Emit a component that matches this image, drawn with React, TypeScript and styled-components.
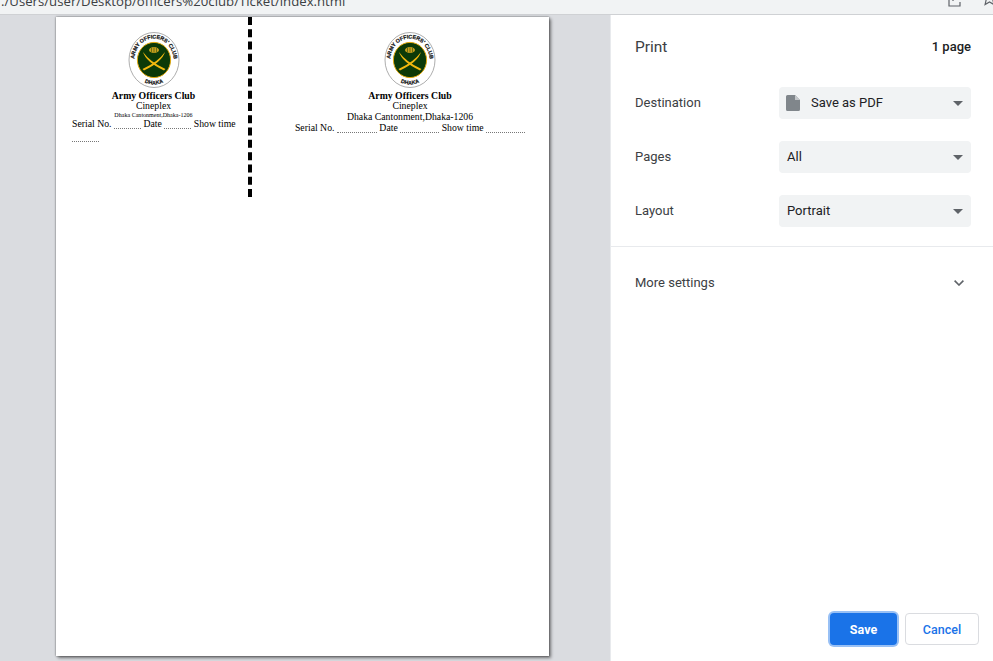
import React from "react";
import styled, { createGlobalStyle } from "styled-components";

const Global = createGlobalStyle`
  html, body { margin: 0; padding: 0; background: #fff; overflow: hidden; }
  #root { width: 993px; height: 661px; }
`;

const Shell = styled.div`
  width: 993px;
  height: 661px;
  display: flex;
  flex-direction: column;
  overflow: hidden;
  font-family: Roboto, "Liberation Sans", sans-serif;
  color: #202124;
`;

const AddressBar = styled.header`
  flex: 0 0 15px;
  height: 15px;
  box-sizing: border-box;
  display: flex;
  align-items: flex-end;
  justify-content: space-between;
  overflow: hidden;
  background: #f1f3f4;
  border-bottom: 1px solid #cfd1d4;
`;

const Url = styled.span`
  font-family: "Open Sans", "Noto Sans", sans-serif;
  font-size: 13.2px;
  line-height: 20px;
  color: #3c4043;
  white-space: nowrap;
  margin: 0 0 3px 1px;
`;

const BarIcons = styled.div`
  display: flex;
  gap: 19px;
  align-items: flex-end;
  margin: 0 -4px 7px 0;
`;

const Main = styled.div`
  flex: 1;
  display: flex;
  min-height: 0;
`;

const Preview = styled.section`
  flex: 0 0 610px;
  background: #dadce0;
  padding: 2px 0 0 56px;
  box-sizing: border-box;
`;

const Sheet = styled.article`
  width: 493px;
  height: 639px;
  background: #fff;
  box-shadow: 0 0 2px rgba(0, 0, 0, 0.55), 2px 2px 3px rgba(0, 0, 0, 0.45);
  display: flex;
  align-items: flex-start;
  font-family: "Liberation Serif", "Times New Roman", serif;
  color: #000;
`;

const Ticket = styled.div<{ $stub?: boolean }>`
  box-sizing: border-box;
  height: 180px;
  padding-top: 14px;
  text-align: center;
  ${(p) =>
    p.$stub
      ? `
    flex: 0 0 196px;
    border-right: 4px dashed #000;
    padding-left: 3px;
  `
      : `
    flex: 0 0 278px;
    margin-left: 19px;
  `}
`;

const Logo = styled.svg`
  display: block;
  margin: 0 auto;
  width: 52px;
  height: 58px;
`;

const Club = styled.div`
  font-size: 9.75px;
  line-height: 11px;
  font-weight: 700;
  margin-top: 1px;
`;

const Venue = styled.div`
  font-size: 9.75px;
  line-height: 10px;
`;

const Address = styled.div<{ $small?: boolean }>`
  font-size: ${(p) => (p.$small ? "6.05px" : "9.75px")};
  line-height: ${(p) => (p.$small ? "8px" : "11px")};
`;

const Fields = styled.div<{ $stub?: boolean }>`
  font-size: 9.75px;
  line-height: 12.5px;
  ${(p) =>
    p.$stub
      ? `text-align: left; width: 170px; margin: -1px 0 0 13px;`
      : `text-align: center; margin-top: 0;`}
`;

const Blank = styled.span<{ $w: number }>`
  display: inline-block;
  width: ${(p) => p.$w}px;
  height: 10px;
  border-bottom: 1px dotted #777;
  vertical-align: -2px;
`;

const Panel = styled.aside`
  flex: 1;
  box-sizing: border-box;
  border-left: 1px solid #e8eaed;
  background: #fff;
  display: flex;
  flex-direction: column;
`;

const PanelHead = styled.div`
  display: flex;
  justify-content: space-between;
  align-items: center;
  height: 20px;
  margin-top: 22px;
  padding: 0 22px 0 24px;
`;

const Title = styled.h1`
  margin: 0;
  font-size: 15.5px;
  font-weight: 400;
  color: #3c4043;
`;

const PageCount = styled.span`
  font-size: 13px;
  font-weight: 500;
  color: #202124;
  padding-bottom: 1px;
`;

const Settings = styled.div`
  display: flex;
  flex-direction: column;
  gap: 22px;
  margin-top: 30px;
  padding: 0 22px 0 24px;
`;

const Row = styled.div`
  display: flex;
  align-items: center;
  justify-content: space-between;
`;

const Label = styled.span`
  font-size: 13px;
  color: #3c4043;
  padding-bottom: 2px;
`;

const Select = styled.div`
  width: 192px;
  height: 32px;
  box-sizing: border-box;
  background: #f1f3f4;
  border-radius: 4px;
  display: flex;
  align-items: center;
  padding: 0 8px;
  gap: 11px;
  font-size: 13px;
  color: #202124;
`;

const SelectText = styled.span`
  flex: 1;
  padding-bottom: 2px;
`;

const Caret = styled.span`
  width: 0;
  height: 0;
  border-left: 5px solid transparent;
  border-right: 5px solid transparent;
  border-top: 5px solid #5f6368;
`;

const Divider = styled.hr`
  margin: 19px 0 0;
  border: 0;
  border-top: 1px solid #e8eaed;
`;

const More = styled.div`
  display: flex;
  align-items: center;
  justify-content: space-between;
  margin-top: 27px;
  height: 18px;
  padding: 0 29px 0 24px;
`;

const Footer = styled.div`
  margin-top: auto;
  display: flex;
  justify-content: flex-end;
  gap: 8px;
  padding: 0 14px 16px 0;
`;

const Button = styled.button<{ $primary?: boolean }>`
  box-sizing: border-box;
  height: 32px;
  border-radius: 4px;
  font-family: Roboto, "Liberation Sans", sans-serif;
  font-size: 12.5px;
  font-weight: 500;
  padding: 0;
  ${(p) =>
    p.$primary
      ? `
    width: 67px;
    border: 0;
    background: #1a73e8;
    color: #fff;
    font-weight: 700;
    box-shadow: 0 0 0 2px rgba(26, 115, 232, 0.45);
  `
      : `
    width: 74px;
    border: 1px solid #dadce0;
    background: #fff;
    color: #1a73e8;
  `}
`;

const IconSlot = styled.svg`
  margin-left: -1px;
`;

const ArmyLogo = ({ id }: { id: string }) => (
  <Logo viewBox="0 0 52 58" role="img" aria-label="Army Officers Club Dhaka emblem">
    <defs>
      <path id={`${id}-top`} d="M7.8 37 A19.6 21.5 0 1 1 44.2 37" />
      <path id={`${id}-bot`} d="M10 47.5 Q26 59.5 42 47.5" />
    </defs>
    <ellipse cx="26" cy="29" rx="25" ry="27.5" fill="#fff" stroke="#8a8a8a" strokeWidth="0.7" />
    <text fontFamily="Liberation Sans, sans-serif" fontSize="5.4" fontWeight="700" fill="#111" stroke="#111" strokeWidth="0.2" textAnchor="middle">
      <textPath href={`#${id}-top`} startOffset="50%">
        ARMY OFFICERS' CLUB
      </textPath>
    </text>
    <text fontFamily="Liberation Sans, sans-serif" fontSize="5.4" fontWeight="700" fill="#111" stroke="#111" strokeWidth="0.2" textAnchor="middle">
      <textPath href={`#${id}-bot`} startOffset="50%">
        DHAKA
      </textPath>
    </text>
    <ellipse cx="26" cy="29" rx="16.6" ry="17.6" fill="#0c3a08" stroke="#e0a90f" strokeWidth="1" />
    <path d="M15 21 Q18 31 36 39.5 L37.5 38 Q22 31 15 21Z" fill="#f1b80f" />
    <path d="M37 21 Q34 31 16 39.5 L14.5 38 Q30 31 37 21Z" fill="#f1b80f" />
    <ellipse cx="26" cy="19" rx="5" ry="3" fill="#c9a11c" />
    <path d="M26 16.5 V21.5 M23.5 17 V21 M28.5 17 V21" stroke="#0c3a08" strokeWidth="0.5" />
  </Logo>
);

const ShareIcon = () => (
  <svg width="15" height="15" viewBox="0 0 15 15" fill="none" stroke="#5f6368" strokeWidth="1.2">
    <path d="M4 4 H1 V14 H12 V10" />
    <path d="M5 9 C5 5 8 3.5 11 3.5 H14 M11 0.5 L14 3.5 L11 6.5" />
  </svg>
);

const StarIcon = () => (
  <svg width="15" height="15" viewBox="0 0 15 15" fill="none" stroke="#5f6368" strokeWidth="1.2">
    <path d="M7.5 -1 L9.6 3.7 L14.6 4.2 L10.8 7.6 L11.9 12.6 L7.5 10 L3.1 12.6 L4.2 7.6 L0.4 4.2 L5.4 3.7Z" />
  </svg>
);

const FileIcon = () => (
  <IconSlot width="14" height="16" viewBox="0 0 14 16">
    <path d="M1.5 0 H9 L14 5 V14.5 a1.5 1.5 0 0 1 -1.5 1.5 H1.5 a1.5 1.5 0 0 1 -1.5 -1.5 V1.5 a1.5 1.5 0 0 1 1.5 -1.5Z" fill="#80868b" />
    <path d="M9 0 V5 H14Z" fill="#c4c7ca" />
  </IconSlot>
);

const Chevron = () => (
  <svg width="10" height="6" viewBox="0 0 10 6" fill="none" stroke="#5f6368" strokeWidth="1.6">
    <path d="M0.6 0.6 L5 5 L9.4 0.6" />
  </svg>
);

const settings = [
  { label: "Destination", value: "Save as PDF", icon: true },
  { label: "Pages", value: "All", icon: false },
  { label: "Layout", value: "Portrait", icon: false },
];

export default function App() {
  return (
    <Shell>
      <Global />
      <AddressBar>
        <Url>./Users/user/Desktop/officers%20club/Ticket/index.html</Url>
        <BarIcons>
          <ShareIcon />
          <StarIcon />
        </BarIcons>
      </AddressBar>
      <Main>
        <Preview>
          <Sheet>
            <Ticket $stub>
              <ArmyLogo id="stub" />
              <Club>Army Officers Club</Club>
              <Venue>Cineplex</Venue>
              <Address $small>Dhaka Cantonment,Dhaka-1206</Address>
              <Fields $stub>
                Serial No. <Blank $w={27} /> Date <Blank $w={27} /> Show time <Blank $w={27} />
              </Fields>
            </Ticket>
            <Ticket>
              <ArmyLogo id="main" />
              <Club>Army Officers Club</Club>
              <Venue>Cineplex</Venue>
              <Address>Dhaka Cantonment,Dhaka-1206</Address>
              <Fields>
                Serial No. <Blank $w={40} /> Date <Blank $w={39} /> Show time <Blank $w={39} />
              </Fields>
            </Ticket>
          </Sheet>
        </Preview>
        <Panel>
          <PanelHead>
            <Title>Print</Title>
            <PageCount>1 page</PageCount>
          </PanelHead>
          <Settings>
            {settings.map((s) => (
              <Row key={s.label}>
                <Label>{s.label}</Label>
                <Select>
                  {s.icon && <FileIcon />}
                  <SelectText>{s.value}</SelectText>
                  <Caret />
                </Select>
              </Row>
            ))}
          </Settings>
          <Divider />
          <More>
            <Label>More settings</Label>
            <Chevron />
          </More>
          <Footer>
            <Button $primary>Save</Button>
            <Button>Cancel</Button>
          </Footer>
        </Panel>
      </Main>
    </Shell>
  );
}
